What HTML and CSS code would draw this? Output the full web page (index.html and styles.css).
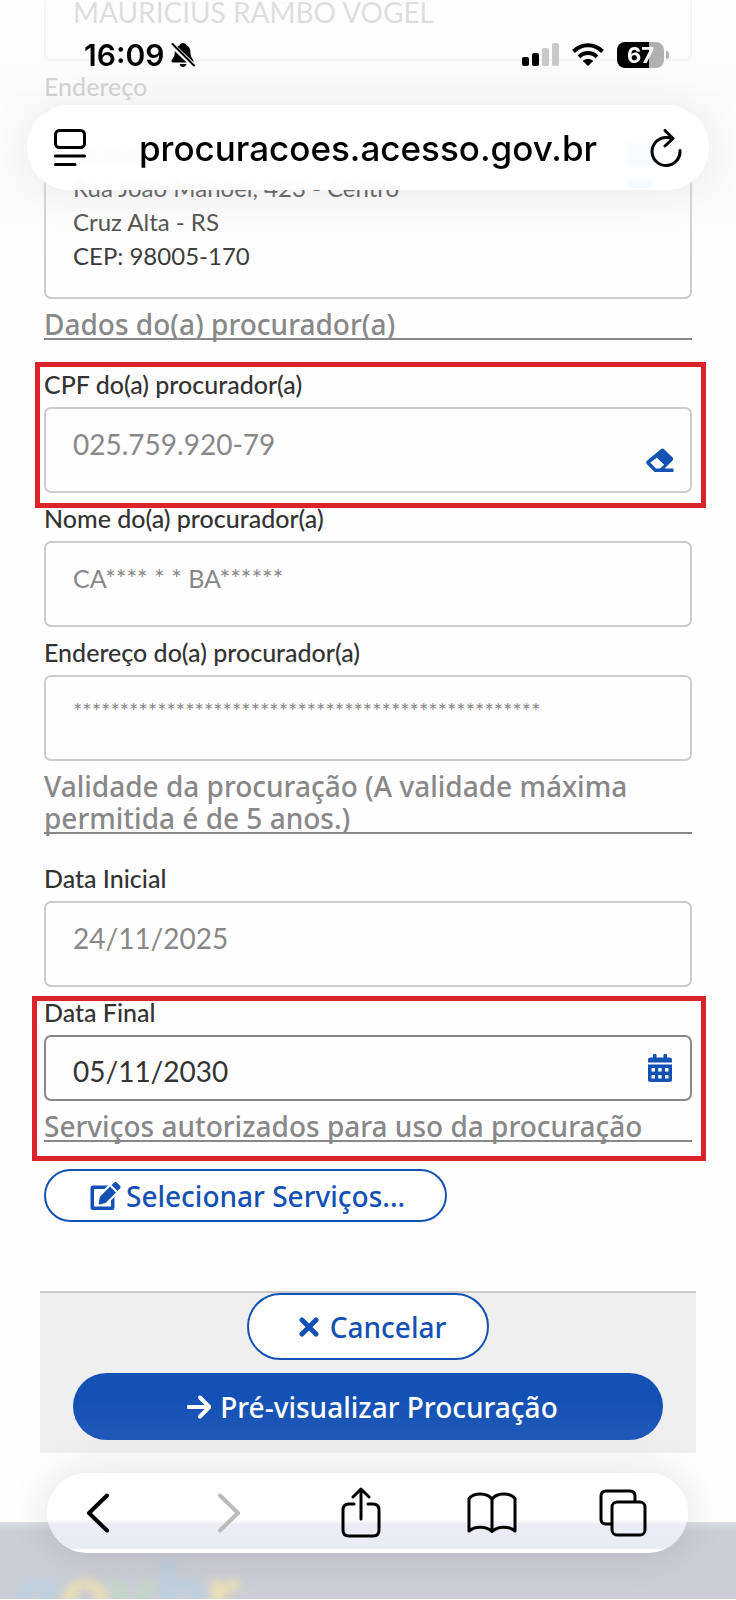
FILE: index.html
```html
<!DOCTYPE html>
<html lang="pt-BR">
<head>
    <meta charset="UTF-8">
    <meta name="viewport" content="width=device-width, initial-scale=1.0">
    <title>Procurações - gov.br</title>
    <link rel="stylesheet" href="styles.css">
</head>
<body>

    <header class="browser-top">
        <div class="status-bar">
            <div class="status-left">
                <span class="clock">16:09</span>
                <svg class="bell" viewBox="0 0 24 26" aria-hidden="true">
                    <path d="M12 1C14 1 15 2 15.400 3.200C18.500 4.500 19.500 7.500 19.500 11C19.500 15.500 22.500 17 22.500 19.500Q22.500 20.500 21 20.500H2Q.5 20.500.5 19.500C.5 17 3.700 15.500 3.700 11C3.700 7.500 5.500 4.500 8.600 3.200C9 2 10 1 12 1ZM8.500 22H15.500C15 24 13.600 25 12 25S9 24 8.500 22Z"/>
                    <path class="bell-gap" d="M0 2L24 25"/>
                    <path class="bell-slash" d="M1.500 2L23 23.500"/>
                </svg>
            </div>
            <div class="status-right">
                <svg class="signal" viewBox="0 0 37 24" aria-hidden="true">
                    <rect x="0" y="14" width="7" height="9" rx="2"/>
                    <rect x="10" y="10" width="7" height="13" rx="2"/>
                    <rect class="off" x="20" y="5" width="7" height="18" rx="2"/>
                    <rect class="off" x="30" y="0" width="7" height="23" rx="2"/>
                </svg>
                <svg class="wifi" viewBox="0 0 32 24" aria-hidden="true">
                    <path class="arc" d="M1.500 8.500C9.500 .2 22.500 .2 30.500 8.500M7 13.800C12 8.800 20 8.800 25 13.800"/>
                    <path d="M16 23L10.800 17.900C13.800 15.400 18.200 15.400 21.200 17.900Z"/>
                </svg>
                <div class="battery"><span>67</span></div>
            </div>
        </div>
        <div class="address-bar">
            <button type="button" class="icon-button" aria-label="Menu da página">
                <svg class="reader" viewBox="0 0 32 38" aria-hidden="true">
                    <rect x="1.500" y="1.500" width="29" height="17" rx="4"/>
                    <path d="M1.500 27H30.500M1.500 35.500H21"/>
                </svg>
            </button>
            <span class="url">procuracoes.acesso.gov.br</span>
            <button type="button" class="icon-button" aria-label="Recarregar">
                <svg class="reload" viewBox="0 0 32 38" aria-hidden="true">
                    <path d="M30 21.500A14 14 0 1 1 16 8.500Q19.500 8.500 22 9.500M15 1.500L23 9.500L15 17"/>
                </svg>
            </button>
        </div>
    </header>

    <main>
        <form class="form">
            <div class="field first">
                <input class="short" type="text" value="MAURICIUS RAMBO VOGEL" aria-label="Nome" readonly>
            </div>

            <div class="field">
                <label for="endereco">Endereço</label>
                <div class="control">
                    <textarea id="endereco" rows="4" readonly>
HOME
Rua João Manoel, 423 - Centro
Cruz Alta - RS
CEP: 98005-170</textarea>
                    <div class="actions"><i></i><i></i></div>
                </div>
            </div>

            <h2>Dados do(a) procurador(a)</h2>

            <div class="field after-title marked">
                <label for="cpf">CPF do(a) procurador(a)</label>
                <div class="control">
                    <input id="cpf" type="text" value="025.759.920-79" readonly>
                    <button type="button" class="field-icon low" aria-label="Limpar">
                        <svg viewBox="0 0 28 24" aria-hidden="true">
                            <path fill-rule="evenodd" d="M14.800 1.200Q16.500-.3 18.100 1.200L26.300 9.300Q28 11 26.300 12.800L18.600 20.600H27.500V24H8.500L1 16.200Q-.6 14.400 1 12.700ZM10.800 9.700L4.200 14.400L9.900 20.400H14L18.200 16.800Z"/>
                        </svg>
                    </button>
                </div>
            </div>

            <div class="field">
                <label for="nome">Nome do(a) procurador(a)</label>
                <input id="nome" class="masked-name" type="text" value="CA**** * * BA******" readonly>
            </div>

            <div class="field">
                <label for="endereco-procurador">Endereço do(a) procurador(a)</label>
                <input id="endereco-procurador" class="masked" type="text" value="**************************************************" readonly>
            </div>

            <h2>Validade da procuração (A validade máxima permitida é de 5 anos.)</h2>

            <div class="field after-title">
                <label for="data-inicial">Data Inicial</label>
                <input id="data-inicial" type="text" value="24/11/2025" readonly>
            </div>

            <div class="marked marked-final">
                <div class="field">
                    <label for="data-final">Data Final</label>
                    <div class="control">
                        <input id="data-final" class="editable" type="text" value="05/11/2030">
                        <button type="button" class="field-icon" aria-label="Abrir calendário">
                            <svg class="calendar" viewBox="0 0 24 28" aria-hidden="true">
                                <path fill-rule="evenodd" d="M5 1Q5 0 6 0H7.500Q8.500 0 8.500 1V3.500H15.500V1Q15.500 0 16.500 0H18Q19 0 19 1V3.500H21.500Q24 3.500 24 6V8.500H0V6Q0 3.500 2.500 3.500H5ZM0 10.500H24V25.500Q24 28 21.500 28H2.500Q0 28 0 25.500ZM3.500 14V17.500H7V14ZM10.200 14V17.500H13.700V14ZM17 14V17.500H20.500V14ZM3.500 21V24.500H7V21ZM10.200 21V24.500H13.700V21ZM17 21V24.500H20.500V21Z"/>
                            </svg>
                        </button>
                    </div>
                </div>
                <h2>Serviços autorizados para uso da procuração</h2>
            </div>

            <button type="button" class="btn btn-services">
                <svg class="edit" viewBox="0 0 31 28" aria-hidden="true">
                    <path d="M18 3.500H3Q.5 3.500.5 6V25.500Q.5 28 3 28H22Q24.500 28 24.500 25.500V15L21 18.500V24.500H4V7H14.500ZM20 4.500L26 10.500L15.500 21L9.500 22.500Q8.500 22.500 8.700 21.500L9.800 15ZM21.500 3L24 .7Q25.500-.5 27 .7L30 3.700Q31.200 5 30 6.500L27.500 9Z"/>
                </svg>
                Selecionar Serviços...
            </button>

            <div class="form-footer">
                <button type="button" class="btn btn-cancel">
                    <svg class="close" viewBox="0 0 20 20" aria-hidden="true"><path d="M3 3L17 17M17 3L3 17"/></svg>
                    Cancelar
                </button>
                <button type="button" class="btn btn-primary">
                    <svg class="arrow" viewBox="0 0 24 24" aria-hidden="true"><path d="M1.500 12H22M13 2.500L22.500 12L13 21.500"/></svg>
                    Pré-visualizar Procuração
                </button>
            </div>
        </form>
    </main>

    <footer class="site-footer">
        <div class="logo"><span class="blue">g</span><span class="yellow">o</span><span class="green">v</span><span class="blue">b</span><span class="yellow">r</span></div>
    </footer>

    <nav class="toolbar">
        <button type="button" class="icon-button" aria-label="Voltar">
            <svg class="chevron" viewBox="0 0 24 40" aria-hidden="true"><path d="M21 2.500L3 20L21 37.500"/></svg>
        </button>
        <button type="button" class="icon-button" aria-label="Avançar" disabled>
            <svg class="chevron" viewBox="0 0 24 40" aria-hidden="true"><path d="M3 2.500L21 20L3 37.500"/></svg>
        </button>
        <button type="button" class="icon-button" aria-label="Compartilhar">
            <svg class="share" viewBox="0 0 40 52" aria-hidden="true">
                <path d="M13 17H8Q2 17 2 23V43Q2 49 8 49H32Q38 49 38 43V23Q38 17 32 17H27M20 32V3M12 10L20 2L28 10"/>
            </svg>
        </button>
        <button type="button" class="icon-button" aria-label="Favoritos">
            <svg class="book" viewBox="0 0 50 42" aria-hidden="true">
                <path d="M25 39.500V7C20 .5 7 .5 2 6.500V39C8 34 19 34 25 39.500C31 34 42 34 48 39V6.500C43 .5 30 .5 25 7"/>
            </svg>
        </button>
        <button type="button" class="icon-button" aria-label="Abas">
            <svg class="tabs" viewBox="0 0 48 48" aria-hidden="true">
                <path d="M36 12V7Q36 2 31 2H7Q2 2 2 7V30Q2 35 7 35H12"/>
                <rect x="13" y="13" width="33" height="33" rx="5"/>
            </svg>
        </button>
    </nav>

</body>
</html>
```

FILE: styles.css
```css
* {
    box-sizing: border-box;
}

body {
    margin: 0;
    background-color: #fefefe;
    color: #333;
    font-family: Lato, "Open Sans", sans-serif;
    font-size: 24px;
    line-height: 28px;
}

button {
    font: inherit;
    cursor: pointer;
}

/* --- Browser bars over the page --- */
.browser-top {
    position: fixed;
    top: 0;
    left: 0;
    right: 0;
    height: 270px;
    padding: 38px 27px 0;
    background: linear-gradient(rgba(253, 253, 253, 0.85) 0, rgba(251, 251, 251, 0.8) 100px, rgba(245, 245, 245, 0.3) 190px, rgba(254, 254, 254, 0) 270px);
    color: #000;
    font-family: Inter, sans-serif;
    pointer-events: none;
    z-index: 2;
}

.status-bar {
    display: flex;
    justify-content: space-between;
    height: 34px;
    padding: 0 45px 0 57px;
}

.status-left,
.status-right {
    display: flex;
    align-items: center;
}

.status-left {
    gap: 7px;
}

.status-right {
    gap: 13px;
}

.clock {
    font-size: 30px;
    font-weight: 600;
}

.bell {
    width: 24px;
    height: 26px;
}

.bell-gap,
.bell-slash {
    fill: none;
    stroke: #fcfcfc;
    stroke-width: 5;
}

.bell-slash {
    stroke: #000;
    stroke-width: 2;
    stroke-linecap: round;
}

.signal {
    width: 37px;
    height: 24px;
}

.signal .off {
    fill: #c9c9c9;
}

.wifi {
    width: 32px;
    height: 24px;
}

.wifi .arc {
    fill: none;
    stroke: #000;
    stroke-width: 4;
}

.battery {
    position: relative;
    width: 47px;
    height: 26px;
    border-radius: 8px;
    background: linear-gradient(90deg, #000 68%, #b0b0b0 68%);
    color: #fff;
    font-size: 22px;
    font-weight: 700;
    line-height: 26px;
    text-align: center;
}

.battery::after {
    content: "";
    position: absolute;
    top: 9px;
    right: -5px;
    width: 3px;
    height: 8px;
    border-radius: 0 3px 3px 0;
    background-color: #b0b0b0;
}

.address-bar {
    display: flex;
    align-items: center;
    justify-content: space-between;
    height: 85px;
    margin-top: 33px;
    padding: 0 27px;
    border-radius: 43px;
    background-color: rgba(255, 255, 255, 0.92);
    backdrop-filter: blur(3px);
    box-shadow: 0 0 50px rgba(0, 0, 0, 0.07);
}

.url {
    font-size: 35px;
    font-weight: 500;
    line-height: 44px;
}

.icon-button {
    display: flex;
    justify-content: center;
    padding: 0;
    border: 0;
    background: none;
    color: #000;
    pointer-events: auto;
}

.icon-button:disabled {
    color: #bbb;
}

.icon-button svg {
    fill: none;
    stroke: currentColor;
    stroke-width: 3;
    stroke-linecap: round;
    stroke-linejoin: round;
}

.reader,
.reload {
    width: 32px;
    height: 38px;
}

/* --- Form --- */
.form {
    display: flex;
    flex-direction: column;
    padding: 0 44px;
}

.field {
    display: flex;
    flex-direction: column;
    gap: 9px;
    margin-top: 11px;
}

.field.first {
    margin-top: 0;
}

.field.after-title {
    margin-top: 30px;
}

.field label {
    font-size: 25px;
    font-weight: 500;
}

.control {
    position: relative;
    display: flex;
}

input,
textarea {
    width: 100%;
    margin: 0;
    border: 2px solid #ccc;
    border-radius: 7px;
    outline: none;
    background-color: transparent;
    color: #888;
    font: inherit;
}

input {
    height: 86px;
    padding: 0 70px 12px 27px;
    font-size: 28px;
}

input.short {
    height: 61px;
    padding-bottom: 36px;
    border-top: 0;
    border-radius: 0 0 7px 7px;
    color: #333;
}

input.masked-name {
    font-size: 25px;
}

input.masked {
    padding-bottom: 16px;
    font-size: 22px;
}

input.editable {
    height: 66px;
    padding-top: 6px;
    padding-bottom: 0;
    border-color: #888;
    color: #333;
}

textarea {
    height: 190px;
    padding: 26px 27px 0;
    color: #333;
    line-height: 34px;
    resize: none;
    overflow: hidden;
}

.actions {
    position: absolute;
    top: 33px;
    right: 40px;
    display: grid;
    gap: 14px;
}

.actions i {
    width: 24px;
    height: 24px;
    background-color: #0c8ff0;
}

.actions i:last-child {
    height: 8px;
}

.field-icon {
    position: absolute;
    top: 19px;
    right: 18px;
    padding: 0;
    border: 0;
    background: none;
}

.field-icon.low {
    top: 41px;
}

.field-icon svg {
    display: block;
    width: 28px;
    height: 24px;
    fill: #1351b4;
}

.field-icon .calendar {
    height: 28px;
}

h2 {
    margin: 9px 0 0;
    box-shadow: inset 0 -2px #888;
    color: #888;
    font-family: "Noto Sans", "Open Sans", sans-serif;
    font-size: 28px;
    font-weight: 500;
    line-height: 32px;
}

/* Red frame drawn around the fields to fill in */
.marked {
    position: relative;
}

.marked::after {
    content: "";
    position: absolute;
    inset: -8px -14px -15px -9px;
    border: 5px solid #dc2329;
    pointer-events: none;
}

.marked-final {
    margin-top: 11px;
}

.marked-final .field {
    margin-top: 0;
}

.marked-final::after {
    inset: -2px -14px -19px -12px;
}

/* --- Buttons --- */
.btn {
    display: flex;
    align-items: center;
    justify-content: center;
    gap: 11px;
    height: 67px;
    padding: 0 41px 0 50px;
    border: 2px solid #1351b4;
    border-radius: 34px;
    background-color: #fff;
    color: #1351b4;
    font-family: "Noto Sans", "Open Sans", sans-serif;
    font-size: 28px;
    font-weight: 500;
}

.btn svg {
    fill: currentColor;
}

.btn-services {
    align-self: flex-start;
    gap: 5px;
    height: 53px;
    margin-top: 27px;
    padding: 0 40px 0 44px;
}

.edit {
    width: 31px;
    height: 28px;
}

.btn .close,
.btn .arrow {
    width: 20px;
    height: 20px;
    fill: none;
    stroke: currentColor;
    stroke-width: 5;
    stroke-linecap: round;
}

.btn .arrow {
    width: 24px;
    height: 24px;
    stroke-width: 4;
}

.form-footer {
    display: flex;
    flex-direction: column;
    align-items: center;
    gap: 13px;
    margin: 69px -4px 0;
    padding: 0 33px 13px;
    border-top: 2px solid #ccc;
    background-color: #efefef;
}

.btn-primary {
    gap: 9px;
    width: 100%;
    border: 0;
    background: linear-gradient(#1351b4 40%, #2159b8);
    color: #fff;
}

/* --- Page footer --- */
.site-footer {
    height: 77px;
    margin-top: 69px;
    padding: 29px 14px 0;
    background: linear-gradient(#dcdfe4, #cbced6 10px);
    overflow: hidden;
}

.logo {
    font-size: 88px;
    font-weight: 900;
    line-height: 80px;
    filter: blur(4px);
}

.blue {
    color: #bccfe0;
}

.yellow {
    color: #ebdfb4;
}

.green {
    color: #c0d8c4;
}

/* --- Bottom toolbar --- */
.toolbar {
    position: fixed;
    left: 47px;
    right: 48px;
    bottom: 47px;
    display: flex;
    align-items: center;
    justify-content: space-between;
    height: 80px;
    padding: 0 40px 0 26px;
    border-radius: 40px;
    background: linear-gradient(#fff 58%, #eaedf5 64%, #eaecf4 94%, #fff 96%);
    box-shadow: 0 0 40px rgba(0, 0, 0, 0.12);
    z-index: 2;
}

.toolbar .icon-button {
    width: 50px;
}

.chevron {
    width: 24px;
    height: 40px;
}

.toolbar .chevron {
    stroke-width: 4;
}

.share {
    width: 40px;
    height: 52px;
}

.book {
    width: 50px;
    height: 42px;
}

.tabs {
    width: 48px;
    height: 48px;
}
```
